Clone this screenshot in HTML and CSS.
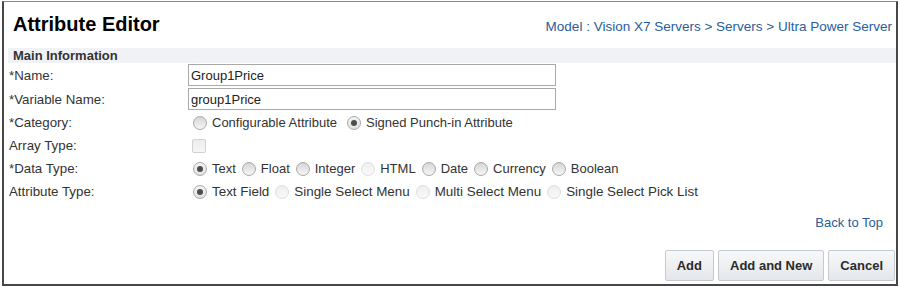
FILE: index.html
```html
<!DOCTYPE html>
<html lang="en">
<head>
    <meta charset="UTF-8">
    <title>Attribute Editor</title>
    <link rel="stylesheet" href="styles.css">
</head>
<body>
    <div class="editor">
        <div class="editor-header">
            <h1>Attribute Editor</h1>
            <a href="#" class="crumbs">Model : Vision X7 Servers &gt; Servers &gt; Ultra Power Server</a>
        </div>

        <div class="section-bar">Main Information</div>

        <div class="form">
            <div class="row row-input">
                <label class="label">*Name:</label>
                <input class="text-input" type="text" value="Group1Price">
            </div>
            <div class="row row-input">
                <label class="label">*Variable Name:</label>
                <input class="text-input" type="text" value="group1Price">
            </div>
            <div class="row">
                <span class="label">*Category:</span>
                <div class="options">
                    <span class="opt"><span class="radio"></span>Configurable Attribute</span>
                    <span class="opt wide"><span class="radio checked"></span>Signed Punch-in Attribute</span>
                </div>
            </div>
            <div class="row">
                <span class="label">Array Type:</span>
                <div class="options">
                    <span class="checkbox"></span>
                </div>
            </div>
            <div class="row">
                <span class="label">*Data Type:</span>
                <div class="options">
                    <span class="opt"><span class="radio checked"></span>Text</span>
                    <span class="opt"><span class="radio"></span>Float</span>
                    <span class="opt"><span class="radio"></span>Integer</span>
                    <span class="opt"><span class="radio disabled"></span>HTML</span>
                    <span class="opt"><span class="radio"></span>Date</span>
                    <span class="opt"><span class="radio"></span>Currency</span>
                    <span class="opt"><span class="radio"></span>Boolean</span>
                </div>
            </div>
            <div class="row">
                <span class="label">Attribute Type:</span>
                <div class="options loose">
                    <span class="opt"><span class="radio checked"></span>Text Field</span>
                    <span class="opt"><span class="radio disabled"></span>Single Select Menu</span>
                    <span class="opt"><span class="radio disabled"></span>Multi Select Menu</span>
                    <span class="opt"><span class="radio disabled"></span>Single Select Pick List</span>
                </div>
            </div>
        </div>

        <div class="back-top"><a href="#">Back to Top</a></div>

        <div class="actions">
            <button class="btn">Add</button>
            <button class="btn">Add and New</button>
            <button class="btn">Cancel</button>
        </div>
    </div>
</body>
</html>
```

FILE: styles.css
```css
* {
    margin: 0;
    padding: 0;
    box-sizing: border-box;
}

body {
    font-family: "Liberation Sans", Arial, sans-serif;
    font-size: 13px;
    color: #333;
    background: #fff;
    padding: 1px 2px 0 2px;
}

.editor {
    height: 285px;
    border: 2px solid #474747;
    border-top: 1px solid #8a8a8a;
    background: #fff;
}

.editor-header {
    display: flex;
    align-items: baseline;
    justify-content: space-between;
    height: 46px;
    padding: 12px 4px 0 9px;
}

.editor-header h1 {
    font-size: 20px;
    line-height: 20px;
    font-weight: bold;
    color: #000;
}

.crumbs {
    color: #2a5d9a;
    text-decoration: none;
    font-size: 13.5px;
}

.section-bar {
    margin-left: 4px;
    height: 15px;
    line-height: 15px;
    padding-left: 5px;
    background: #f0f2f5;
    font-weight: bold;
    color: #333;
}

.form {
    padding-left: 5px;
}

.row {
    display: flex;
    align-items: center;
    height: 23px;
}

.row-input {
    height: 24px;
}

.label {
    width: 179px;
    flex-shrink: 0;
    font-size: 13.3px;
}

.text-input {
    width: 368px;
    height: 22px;
    border: 1px solid #a9a9a9;
    padding: 0 2px;
    font-family: inherit;
    font-size: 13px;
    color: #222;
}

.options {
    display: flex;
    align-items: center;
}

.options.loose {
    font-size: 13.4px;
}

.opt {
    display: flex;
    align-items: center;
}

.radio {
    width: 14px;
    height: 14px;
    margin: 0 5px 0 6px;
    border-radius: 50%;
    border: 1px solid #a8a8a8;
    background: linear-gradient(#d6d6d6, #f6f6f6);
    position: relative;
}

.opt:first-child .radio {
    margin-left: 5px;
}

.opt.wide .radio {
    margin-left: 10px;
}

.radio.checked {
    background: linear-gradient(#f4f4f4, #e2e2e2);
}

.radio.checked::after {
    content: "";
    position: absolute;
    left: 3px;
    top: 3px;
    width: 6px;
    height: 6px;
    border-radius: 50%;
    background: #4d4d4d;
}

.radio.disabled {
    border-color: #dedede;
    background: linear-gradient(#efefef, #f9f9f9);
}

.checkbox {
    width: 14px;
    height: 14px;
    margin-left: 4px;
    border: 1px solid #d2d2d2;
    border-radius: 2px;
    background: linear-gradient(#ececec, #f6f6f6);
}

.back-top {
    text-align: right;
    padding-right: 13px;
    margin-top: 12px;
    line-height: 16px;
}

.back-top a {
    color: #2a5d9a;
    text-decoration: none;
}

.actions {
    display: flex;
    justify-content: flex-end;
    gap: 4px;
    margin-top: 19px;
    padding-right: 1px;
}

.btn {
    height: 31px;
    padding: 0 11px;
    border: 1px solid #c6cacf;
    border-radius: 2px;
    background: linear-gradient(#f7f8f9, #e4e7ea);
    font-family: inherit;
    font-size: 13px;
    font-weight: bold;
    color: #2b2b2b;
}
```
